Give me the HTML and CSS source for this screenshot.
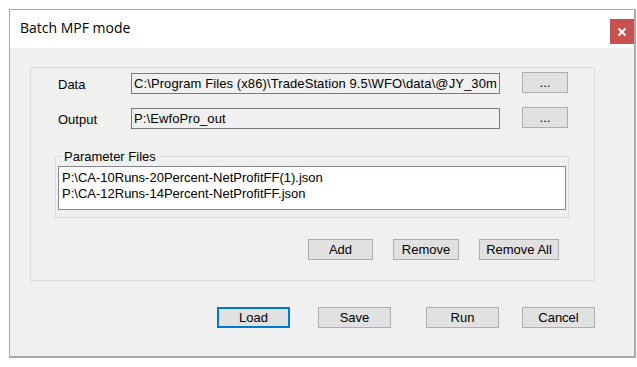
FILE: index.html
```html
<!DOCTYPE html>
<html lang="en">
<head>
    <meta charset="UTF-8">
    <title>Batch MPF mode</title>
    <link rel="stylesheet" href="styles.css">
</head>
<body>

    <div class="window">
        <div class="titlebar">
            <span class="title">Batch MPF mode</span>
            <button class="close" title="Close">
                <svg width="10" height="10" viewBox="0 0 10 10">
                    <path d="M1.5 1.5 L8.5 8.5 M8.5 1.5 L1.5 8.5" stroke="#fff" stroke-width="2"/>
                </svg>
            </button>
        </div>

        <div class="client">
            <div class="group">
                <div class="row">
                    <label class="lbl">Data</label>
                    <input class="path" readonly value="C:\Program Files (x86)\TradeStation 9.5\WFO\data\@JY_30min.txt">
                    <button class="btn browse">...</button>
                </div>
                <div class="row">
                    <label class="lbl">Output</label>
                    <input class="path" readonly value="P:\EwfoPro_out">
                    <button class="btn browse">...</button>
                </div>

                <!-- Liste des fichiers de paramètres -->
                <fieldset class="params">
                    <legend>Parameter Files</legend>
                    <div class="listbox">
                        <div>P:\CA-10Runs-20Percent-NetProfitFF(1).json</div>
                        <div>P:\CA-12Runs-14Percent-NetProfitFF.json</div>
                    </div>
                </fieldset>

                <div class="list-actions">
                    <button class="btn btn-add">Add</button>
                    <button class="btn btn-remove">Remove</button>
                    <button class="btn btn-remove-all">Remove All</button>
                </div>
            </div>

            <div class="actions">
                <button class="btn main default">Load</button>
                <button class="btn main save">Save</button>
                <button class="btn main run">Run</button>
                <button class="btn main cancel">Cancel</button>
            </div>
        </div>
    </div>

</body>
</html>
```

FILE: styles.css
```css
body {
    margin: 0;
    background: #fff;
    font-family: "Liberation Sans", Arial, sans-serif;
    font-size: 13px;
    color: #000;
}

.window {
    margin: 9px 0 0 9px;
    width: 627px;
    height: 349px;
    box-sizing: border-box;
    border: 1px solid #a9a9a9;
    border-right-width: 2px;
    border-bottom-width: 2px;
    background: #f0f0f0;
}

/* Barre de titre */
.titlebar {
    display: flex;
    align-items: flex-start;
    height: 38px;
    background: #fff;
}

.title {
    font-family: "Open Sans", "Noto Sans", sans-serif;
    font-size: 14px;
    line-height: 20px;
    padding: 8px 0 0 10px;
    color: #000;
}

.close {
    margin-left: auto;
    margin-top: 9px;
    width: 24px;
    height: 25px;
    border: none;
    padding: 0;
    background: #c75050;
    display: flex;
    align-items: center;
    justify-content: center;
}

/* Zone client */
.client {
    padding: 19px 0 0 20px;
}

.group {
    width: 565px;
    height: 214px;
    box-sizing: border-box;
    border: 1px solid #dcdcdc;
    padding-top: 4px;
}

.row {
    display: flex;
    align-items: flex-start;
    height: 22px;
    padding-left: 27px;
}

.row + .row {
    margin-top: 13px;
}

.lbl {
    width: 73px;
    margin-top: 5px;
    line-height: 15px;
}

.path {
    width: 369px;
    height: 21px;
    margin: 1px 0 0 0;
    box-sizing: border-box;
    border: 1px solid #7a7a7a;
    background: #f0f0f0;
    padding: 0 2px;
    font: inherit;
    letter-spacing: 0.1px;
    line-height: 19px;
    color: #000;
    outline: none;
}

.btn {
    height: 21px;
    box-sizing: border-box;
    border: 1px solid #adadad;
    background: #e1e1e1;
    font: inherit;
    color: #000;
    padding: 0;
    line-height: 19px;
}

.browse {
    width: 46px;
    margin-left: 22px;
}

/* Groupe des fichiers */
.params {
    margin: 20px 0 0 24px;
    padding: 0 2px 7px;
    width: 514px;
    box-sizing: border-box;
    border: 1px solid #dcdcdc;
    min-inline-size: 0;
}

.params legend {
    margin-left: 4px;
    padding: 0 2px;
    line-height: 15px;
}

.listbox {
    height: 44px;
    box-sizing: border-box;
    margin-top: 2px;
    background: #fff;
    border: 1px solid #828790;
    padding: 3px 3px 0;
    line-height: 16px;
}

.list-actions {
    display: flex;
    justify-content: flex-end;
    gap: 20px;
    margin-top: 21px;
    padding-right: 35px;
}

.btn-add { width: 65px; }
.btn-remove { width: 66px; }
.btn-remove-all { width: 80px; }

/* Boutons du bas */
.actions {
    display: flex;
    margin-top: 26px;
    padding-left: 187px;
}

.main {
    width: 73px;
}

.default {
    border: 2px solid #0078d7;
    line-height: 17px;
}

.save { margin-left: 28px; }
.run { margin-left: 35px; }
.cancel { margin-left: 23px; }
```
